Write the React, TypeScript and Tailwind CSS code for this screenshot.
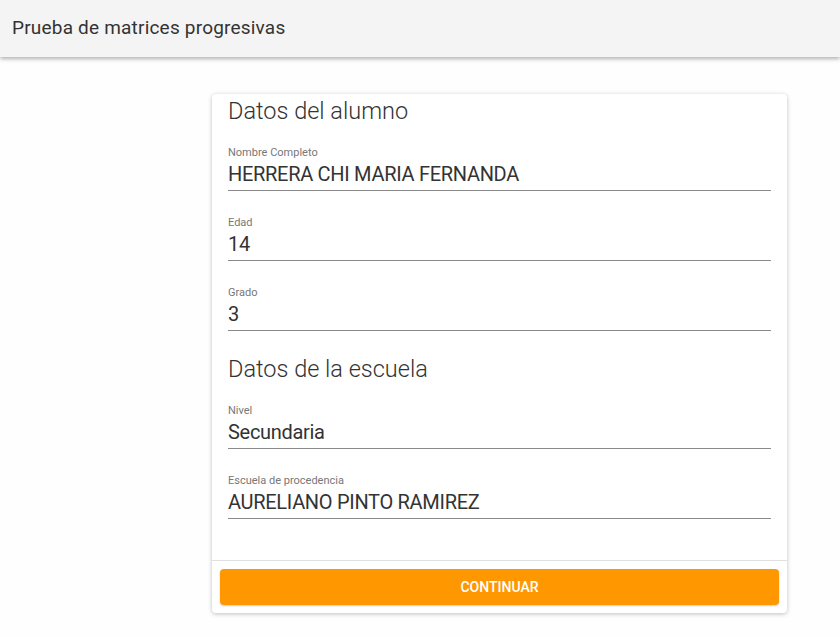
export default function App() {
  const alumno = [
    { label: 'Nombre Completo', value: 'HERRERA CHI MARIA FERNANDA' },
    { label: 'Edad', value: '14' },
    { label: 'Grado', value: '3' },
  ];
  const escuela = [
    { label: 'Nivel', value: 'Secundaria' },
    { label: 'Escuela de procedencia', value: 'AURELIANO PINTO RAMIREZ' },
  ];

  const Field = ({ label, value }: { label: string; value: string }) => (
    <div className="mt-[25px]">
      <div className="text-[11px] leading-[14px] text-[#777777]">{label}</div>
      <div className="mt-[2px] text-[20px] leading-[24px] tracking-[-0.3px] text-[#333333] pb-[4px] border-b border-[#8a8a8a]">
        {value}
      </div>
    </div>
  );

  return (
    <div className="min-h-[637px] bg-[#fefefe]" style={{ fontFamily: 'Roboto, "Liberation Sans", sans-serif' }}>
      <header className="h-[57px] bg-[#f4f4f4] shadow-[0_2px_4px_rgba(0,0,0,0.3)] flex items-center px-3">
        <h1 className="text-[19px] tracking-[0.2px] text-[#333333]">Prueba de matrices progresivas</h1>
      </header>
      <div className="pt-[37px] pl-[212px]">
        <div className="w-[575px] bg-white rounded-[4px] shadow-[0_1px_4px_rgba(0,0,0,0.25)]">
          <div className="px-4 pb-[41px]">
            <h2 className="pt-[2px] text-[23.5px] leading-[30px] font-light text-[#333333]">Datos del alumno</h2>
            <div className="flex flex-col">
              {alumno.map((f, i) => (
                <div key={f.label} className={i === 0 ? '-mt-[5px]' : ''}>
                  <Field label={f.label} value={f.value} />
                </div>
              ))}
            </div>
            <h2 className="mt-[21px] pt-[2px] text-[23.5px] leading-[30px] font-light text-[#333333]">Datos de la escuela</h2>
            <div className="flex flex-col">
              {escuela.map((f, i) => (
                <div key={f.label} className={i === 0 ? '-mt-[5px]' : ''}>
                  <Field label={f.label} value={f.value} />
                </div>
              ))}
            </div>
          </div>
          <div className="border-t border-[#e0e0e0] p-2">
            <button className="w-full h-9 rounded-[4px] bg-[#ff9800] text-white text-[14px] font-medium shadow-[0_1px_2px_rgba(0,0,0,0.2)]">
              CONTINUAR
            </button>
          </div>
        </div>
      </div>
    </div>
  );
}
